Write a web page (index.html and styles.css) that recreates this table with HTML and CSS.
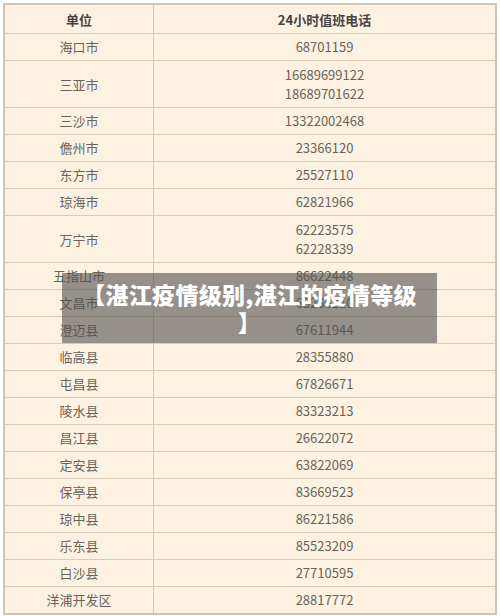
FILE: index.html
```html
<!DOCTYPE html>
<html lang="zh">
<head>
<meta charset="utf-8">
<link rel="stylesheet" href="styles.css">
</head>
<body>
<div class="page">
  <table class="duty">
    <thead>
      <tr><th class="unit">单位</th><th>24小时值班电话</th></tr>
    </thead>
    <tbody>
      <tr><td>海口市</td><td>68701159</td></tr>
      <tr class="two"><td>三亚市</td><td>16689699122<br>18689701622</td></tr>
      <tr><td>三沙市</td><td>13322002468</td></tr>
      <tr><td>儋州市</td><td>23366120</td></tr>
      <tr><td>东方市</td><td>25527110</td></tr>
      <tr><td>琼海市</td><td>62821966</td></tr>
      <tr class="two"><td>万宁市</td><td>62223575<br>62228339</td></tr>
      <tr><td>五指山市</td><td>86622448</td></tr>
      <tr><td>文昌市</td><td>63266210</td></tr>
      <tr><td>澄迈县</td><td>67611944</td></tr>
      <tr><td>临高县</td><td>28355880</td></tr>
      <tr><td>屯昌县</td><td>67826671</td></tr>
      <tr><td>陵水县</td><td>83323213</td></tr>
      <tr><td>昌江县</td><td>26622072</td></tr>
      <tr><td>定安县</td><td>63822069</td></tr>
      <tr><td>保亭县</td><td>83669523</td></tr>
      <tr><td>琼中县</td><td>86221586</td></tr>
      <tr><td>乐东县</td><td>85523209</td></tr>
      <tr><td>白沙县</td><td>27710595</td></tr>
      <tr><td>洋浦开发区</td><td>28817772</td></tr>
    </tbody>
  </table>
  <div class="caption">【湛江疫情级别,湛江的疫情等级<br>】</div>
</div>
</body>
</html>
```

FILE: styles.css
```css
html, body {
  margin: 0;
  padding: 0;
  background: #ffffff;
}
.page {
  position: relative;
  width: 500px;
  height: 616px;
  overflow: hidden;
  padding: 3px 0 0 3px;
  box-sizing: border-box;
}
.duty {
  width: 494px;
  border-collapse: collapse;
  background: #fdf2e1;
  border: 2px solid #d3c3ad;
  font-family: "Noto Sans CJK SC", "Noto Sans", sans-serif;
  font-size: 13px;
  color: #6a635c;
  table-layout: fixed;
}
.duty th, .duty td {
  border: 1px solid #d9cab6;
  text-align: center;
  line-height: 19px;
  padding: 3px 0 4px;
  font-weight: normal;
}
.duty th {
  font-weight: bold;
  color: #4a4440;
  padding: 5px 0 4px;
}
.duty .unit {
  width: 148px;
}
.duty tr.two td {
  padding: 4px 0 4px;
}
.caption {
  position: absolute;
  left: 62px;
  top: 273px;
  width: 375px;
  height: 70px;
  box-sizing: border-box;
  padding: 7px 0;
  background: rgba(80, 80, 80, 0.6);
  color: #ffffff;
  font-family: "Noto Sans CJK SC", sans-serif;
  font-weight: 900;
  font-size: 23px;
  letter-spacing: 0.3px;
  line-height: 28px;
  text-align: center;
}
```
